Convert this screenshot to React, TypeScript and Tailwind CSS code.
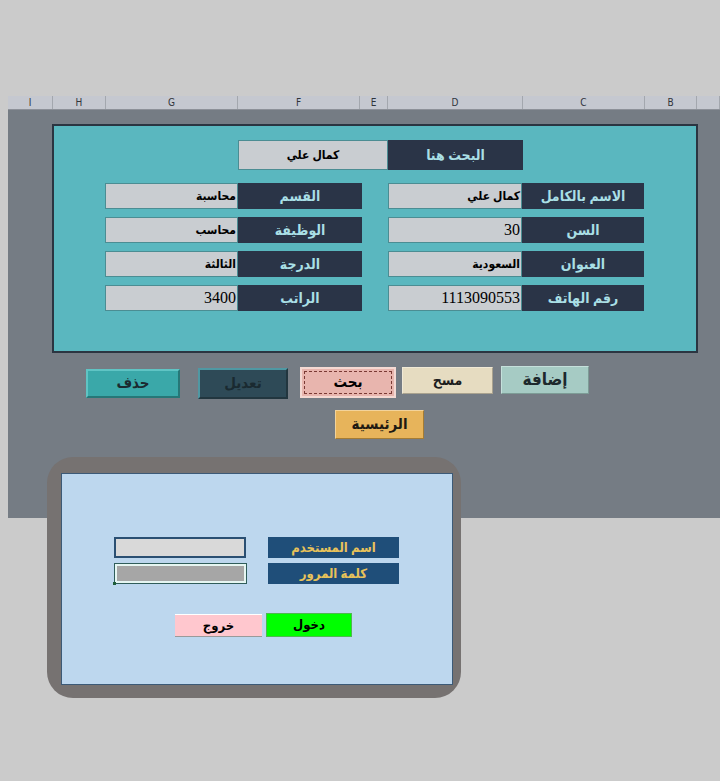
import React from "react";

const cols = [
  { w: 45, l: "I" },
  { w: 53, l: "H" },
  { w: 132, l: "G" },
  { w: 122, l: "F" },
  { w: 28, l: "E" },
  { w: 135, l: "D" },
  { w: 122, l: "C" },
  { w: 52, l: "B" },
  { w: 23, l: "" },
];

const rows = [
  { lv: "محاسبة", ll: "القسم", rv: "كمال علي", rl: "الاسم بالكامل" },
  { lv: "محاسب", ll: "الوظيفة", rv: "30", rl: "السن" },
  { lv: "الثالثة", ll: "الدرجة", rv: "السعودية", rl: "العنوان" },
  { lv: "3400", ll: "الراتب", rv: "1113090553", rl: "رقم الهاتف" },
];

function isNum(v: string) {
  return /^[0-9]+$/.test(v);
}

function Value({ v, w }: { v: string; w: string }) {
  return (
    <div
      className={`${w} flex h-full items-center justify-end border border-[#4b8d93] bg-[#c9cdd1] pr-[1px] text-black`}
    >
      <span className={isNum(v) ? "text-[16px]" : "text-[12px] font-semibold"}>{v}</span>
    </div>
  );
}

function Label({ t, w }: { t: string; w: string }) {
  return (
    <div
      className={`${w} flex h-full items-center justify-center bg-[#2a3447] text-[14px] font-bold text-[#a9dfe5]`}
    >
      {t}
    </div>
  );
}

export default function App() {
  return (
    <div
      className="relative h-[781px] w-[720px] overflow-hidden bg-[#cbcbcb]"
      style={{ fontFamily: '"Liberation Serif", "DejaVu Sans Condensed", "DejaVu Sans", serif' }}
    >
      <div className="h-[96px]" />

      {/* sheet */}
      <div className="ml-[8px] h-[422px] w-[712px] bg-[#757c84]">
        <div className="flex h-[14px] border-b border-[#8d9199] bg-[#c5c8d0]">
          {cols.map((c, i) => (
            <div
              key={i}
              style={{ width: c.w }}
              className="flex items-center justify-center border-r border-[#a3a7ae] text-[10px] leading-none text-[#30343a]"
            >
              <span style={{ fontFamily: '"DejaVu Sans Condensed", "DejaVu Sans", sans-serif' }}>{c.l}</span>
            </div>
          ))}
        </div>

        {/* teal panel */}
        <div className="ml-[44px] mt-[14px] h-[229px] w-[646px] border-2 border-[#2b3541] bg-[#5ab7bf] pt-[14px]">
          <div className="ml-[184px] flex h-[30px]">
            <div className="flex h-full w-[150px] items-center justify-center border border-[#4b8d93] bg-[#c9cdd1] text-[12px] font-semibold text-black">
              كمال علي
            </div>
            <Label t="البحث هنا" w="w-[135px]" />
          </div>

          <div className="mt-[13px] flex flex-col gap-[8px]">
            {rows.map((r) => (
              <div key={r.ll} className="ml-[51px] flex h-[26px]">
                <Value v={r.lv} w="w-[133px]" />
                <Label t={r.ll} w="w-[124px]" />
                <div className="w-[26px]" />
                <Value v={r.rv} w="w-[134px]" />
                <Label t={r.rl} w="w-[122px]" />
              </div>
            ))}
          </div>
        </div>

        {/* buttons */}
        <div className="mt-[13px] flex items-start text-[15px] font-bold">
          <div className="ml-[78px] mt-[3px] flex h-[29px] w-[94px] items-center justify-center border-2 border-t-[#5fc4c4] border-l-[#5fc4c4] border-b-[#267777] border-r-[#267777] bg-[#3aa8a9] text-[#1b2a30]">
            حذف
          </div>
          <div className="ml-[18px] mt-[2px] flex h-[31px] w-[90px] items-center justify-center border-2 border-t-[#4f98a3] border-l-[#4f98a3] border-b-[#22363f] border-r-[#22363f] bg-[#2e4a57] text-[#1a2a31]">
            تعديل
          </div>
          <div className="ml-[12px] mt-[1px] flex h-[31px] w-[96px] items-center justify-center border-2 border-[#f4d9d3] bg-[#e8b5ae] p-[2px] text-black">
            <div className="flex h-full w-full items-center justify-center border border-dashed border-[#7a3a34]">
              بحث
            </div>
          </div>
          <div className="ml-[6px] mt-[1px] flex h-[27px] w-[91px] items-center justify-center border border-b-[#a9a28f] border-r-[#a9a28f] border-t-[#f0e9d6] border-l-[#f0e9d6] bg-[#e6dcc1] text-[14px] text-[#1d1d1d]">
            مسح
          </div>
          <div className="ml-[8px] flex h-[28px] w-[88px] items-center justify-center border border-b-[#7d9c96] border-r-[#7d9c96] border-t-[#c5e0db] border-l-[#c5e0db] bg-[#a6cbc4] text-[17px] text-[#1d282c]">
            إضافة
          </div>
        </div>
        <div className="ml-[327px] mt-[11px] flex h-[29px] w-[89px] items-center justify-center border border-b-[#a57c33] border-r-[#a57c33] border-t-[#f3d39a] border-l-[#f3d39a] bg-[#e7b45b] text-[15px] font-bold text-[#1f1a12]">
          الرئيسية
        </div>
      </div>

      {/* login window */}
      <div className="absolute left-[47px] top-[457px] h-[241px] w-[414px] rounded-[26px] bg-[#767271] pb-[13px] pl-[14px] pr-[8px] pt-[16px]">
        <div className="relative h-full w-full border border-[#3c5a77] bg-[#bdd7ee]">
          <div className="ml-[52px] mt-[63px] flex flex-col gap-[5px]">
            <div className="flex h-[21px]">
              <div className="h-full w-[132px] border-2 border-[#2a4f72] bg-[#d9d9d9]" />
              <div className="ml-[22px] flex h-full w-[131px] items-center justify-center bg-[#1f4e79] text-[13px] font-bold text-[#e8c25a]">
                اسم المستخدم
              </div>
            </div>
            <div className="flex h-[21px]">
              <div className="relative h-full w-[133px] border border-[#2f5d5a] p-0">
                <div className="h-full w-full border-2 border-[#e6f6f2] bg-[#a6a6a6]" />
                <div className="absolute -bottom-[2px] -left-[2px] h-[3px] w-[3px] bg-[#1f5e3a]" />
              </div>
              <div className="ml-[21px] flex h-full w-[131px] items-center justify-center bg-[#1f4e79] text-[13px] font-bold text-[#e8c25a]">
                كلمة المرور
              </div>
            </div>
          </div>

          <div className="ml-[113px] mt-[29px] flex items-start gap-[4px] text-[13px] font-bold text-black">
            <div className="mt-[1px] flex h-[23px] w-[87px] items-center justify-center border-b border-b-[#9a9a9a] border-t border-t-white bg-[#ffc7ce]">
              خروج
            </div>
            <div className="flex h-[24px] w-[86px] items-center justify-center border border-[#4fb84f] bg-[#00ff00]">
              دخول
            </div>
          </div>
        </div>
      </div>
    </div>
  );
}
